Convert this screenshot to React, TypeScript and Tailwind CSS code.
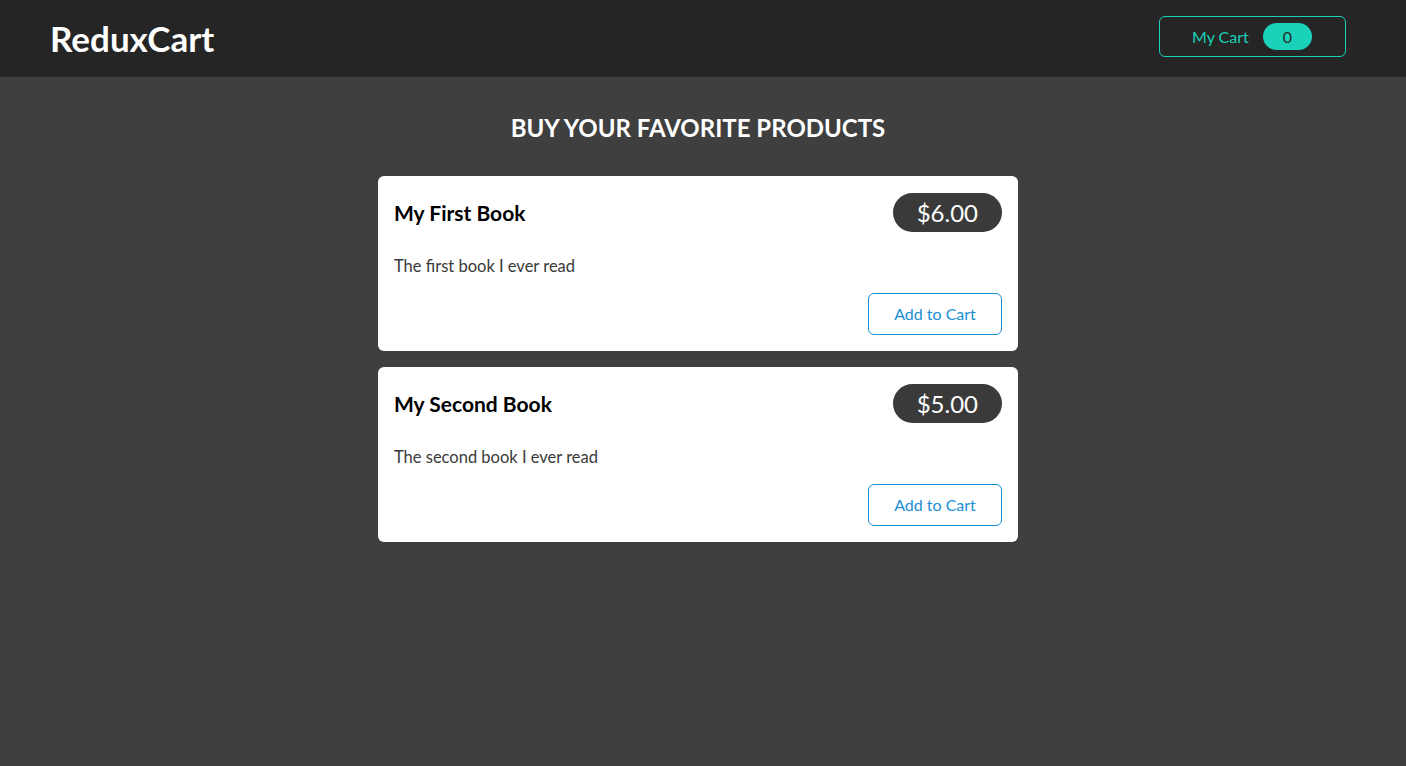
import React from 'react';

type Product = {
  id: string;
  title: string;
  price: number;
  description: string;
};

const PRODUCTS: Product[] = [
  { id: 'p1', title: 'My First Book', price: 6, description: 'The first book I ever read' },
  { id: 'p2', title: 'My Second Book', price: 5, description: 'The second book I ever read' },
];

const font = { fontFamily: 'Lato, "Noto Sans", sans-serif' };

function CartButton() {
  return (
    <button className="mt-[-4px] flex h-[41px] w-[187px] items-center justify-between rounded-md border border-[#1ad1b9] pl-[32px] pr-[33px] text-[#1ad1b9]">
      <span className="text-base">My Cart</span>
      <span className="flex h-[27px] w-[49px] items-center justify-center rounded-full bg-[#1ad1b9] text-base text-[#2b2b2b]">
        0
      </span>
    </button>
  );
}

function ProductItem({ product }: { product: Product }) {
  return (
    <li className="rounded-md bg-white px-4 pb-4 pt-[17px]">
      <header className="flex h-[39px] items-center justify-between">
        <h3 className="text-[21px] font-bold text-black">{product.title}</h3>
        <div className="flex h-[39px] items-center rounded-full bg-[#3a3a3a] px-6 text-2xl text-white">
          ${product.price.toFixed(2)}
        </div>
      </header>
      <p className="mt-[22px] text-[16.5px] leading-6 text-[#3a3a3a]">{product.description}</p>
      <div className="mt-[15px] flex justify-end">
        <button className="h-[42px] w-[134px] rounded-md border border-[#1a8ed1] text-base text-[#1a8ed1]">
          Add to Cart
        </button>
      </div>
    </li>
  );
}

export default function App() {
  return (
    <div className="min-h-[766px] bg-[#3f3f3f]" style={font}>
      <header className="flex h-[77px] items-center justify-between bg-[#252525] pl-[50px] pr-[60px]">
        <h1 className="text-[35px] font-bold text-white">ReduxCart</h1>
        <CartButton />
      </header>
      <main className="pr-[10px]">
        <section className="mx-auto w-[640px]">
          <h2 className="mb-[33px] mt-[36px] text-center text-2xl leading-[30px] font-bold text-white">
            BUY YOUR FAVORITE PRODUCTS
          </h2>
          <ul className="flex flex-col gap-4">
            {PRODUCTS.map((p) => (
              <ProductItem key={p.id} product={p} />
            ))}
          </ul>
        </section>
      </main>
    </div>
  );
}
